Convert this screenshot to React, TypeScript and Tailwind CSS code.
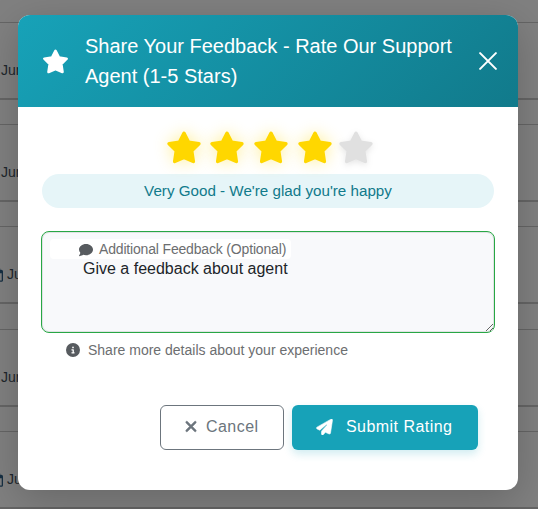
import React from "react";
import { FaComment, FaCircleInfo, FaXmark, FaPaperPlane, FaRegCalendar } from "react-icons/fa6";

const rows = [
  { icon: false, height: "h-[102px]" },
  { icon: false, height: "h-[102px]" },
  { icon: true, height: "h-[103px]" },
  { icon: false, height: "h-[102px]" },
  { icon: true, height: "h-[102px]" },
];

function Star({ className }: { className: string }) {
  return (
    <svg viewBox="0 0 576 512" className={className} fill="currentColor" stroke="currentColor" strokeWidth="56" strokeLinejoin="round">
      <path d="M288 28L362 172L526 196L411 310L437 480L288 416L139 480L165 310L50 196L214 172Z" />
    </svg>
  );
}

function TicketList() {
  return (
    <div className="h-[509px] overflow-hidden pt-[22px]">
      {rows.map((row, i) => (
        <div key={i} className={row.height}>
          <div className="flex h-[78px] items-center gap-[4px] border-t border-b-2 border-t-[#656565] border-b-[#656565] pt-[20px] text-[14px] text-[#20262c]">
            {row.icon && <FaRegCalendar className="-ml-[9px] h-[14px] w-[12px] shrink-0 text-[#162f43]" />}
            <span className={row.icon ? "" : "ml-px"}>Jun</span>
          </div>
        </div>
      ))}
    </div>
  );
}

function Header() {
  return (
    <header className="flex h-[92px] items-center bg-[linear-gradient(135deg,#17a2b8_0%,#117a8b_100%)] pl-[24px] pr-[21px] text-white">
      <Star className="h-[25px] w-[27px] shrink-0" />
      <h1 className="ml-[16px] w-[380px] text-[20px] leading-[30px]">
        Share Your Feedback - Rate Our Support Agent (1-5 Stars)
      </h1>
      <svg viewBox="0 0 16 16" className="ml-auto h-[18px] w-[18px]" fill="none" stroke="currentColor" strokeWidth="1.8" strokeLinecap="round">
        <path d="M1 1L15 15M15 1L1 15" />
      </svg>
    </header>
  );
}

function Stars() {
  return (
    <div className="flex h-[67px] pl-[147.5px] pt-[24px]">
      {[1, 2, 3, 4].map((n) => (
        <Star key={n} className="mr-[7.8px] h-[33px] w-[36px] shrink-0 text-[#ffd700] drop-shadow-[0_0_8px_rgba(255,215,0,0.4)]" />
      ))}
      <Star className="-ml-[3px] h-[33px] w-[36px] shrink-0 text-[#e0e0e0] drop-shadow-[0_2px_3px_rgba(0,0,0,0.1)]" />
    </div>
  );
}

export default function App() {
  return (
    <div className="relative h-[509px] w-[538px] overflow-hidden bg-[#808080] font-['Liberation_Sans',Arial,sans-serif]">
      <TicketList />
      <section className="absolute left-[18px] top-[15px] h-[475px] w-[500px] overflow-hidden rounded-[12px] bg-white shadow-[0_10px_40px_rgba(0,0,0,0.2)]">
        <Header />
        <Stars />
        <div className="mx-[24px] flex h-[34px] items-center justify-center rounded-[20px] bg-[#e6f5f8] text-[15.2px] text-[#117a8b]">
          Very Good - We're glad you're happy
        </div>
        <div className="relative ml-[23px] mt-[23px] h-[102px] w-[454px]">
          <textarea
            className="block h-[102px] w-[454px] resize rounded-[8px] border border-[#28a745] bg-[#f8f9fb] pl-[41px] pt-[25px] text-[16px] leading-[24px] text-[#212529] shadow-[inset_0_0_0_1px_#dfe3e3] outline-none"
            defaultValue="Give a feedback about agent"
          />
          <div className="absolute left-[9px] top-[8px] flex h-[20px] w-[241px] items-center rounded-[4px] bg-white pl-[29px] pt-px text-[14px] tracking-[-0.17px] text-[#6c6e70]">
            <FaComment className="mr-[6px] h-[14px] w-[14px] text-[#575b5f]" />
            Additional Feedback (Optional)
          </div>
        </div>
        <div className="ml-[48px] mt-[7px] flex h-[20px] items-center text-[14px] text-[#6c6e70]">
          <FaCircleInfo className="mr-[8px] h-[14px] w-[14px] text-[#575b5f]" />
          Share more details about your experience
        </div>
        <div className="mr-[40px] mt-[45px] flex justify-end gap-[8px] text-[16px]">
          <button className="flex h-[45px] w-[124px] items-center rounded-[6px] border border-[#6c757d] pb-[2px] pl-[22px] tracking-[0.45px] text-[#6c757d]">
            <FaXmark className="mr-[7px] h-[17px] w-[16px]" stroke="currentColor" strokeWidth="12" />
            Cancel
          </button>
          <button className="flex h-[45px] w-[186px] items-center rounded-[6px] bg-[#17a2b8] pb-[2px] pl-[24px] tracking-[0.45px] text-white shadow-[0_4px_8px_rgba(23,162,184,0.2)]">
            <FaPaperPlane className="mr-[13px] h-[16px] w-[17px]" stroke="currentColor" strokeWidth="18" />
            Submit Rating
          </button>
        </div>
      </section>
    </div>
  );
}
